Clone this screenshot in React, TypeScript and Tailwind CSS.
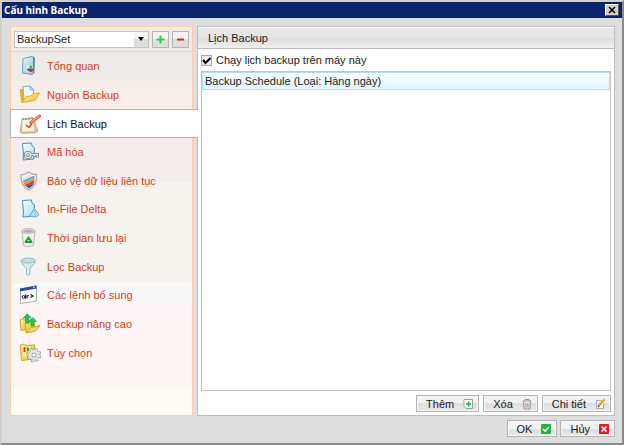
import { useState } from "react";
import type { ReactNode } from "react";

function Icon({ children }: { children: ReactNode }) {
  return (
    <svg viewBox="0 0 22 22" className="size-[22px] shrink-0" aria-hidden="true">
      {children}
    </svg>
  );
}

const sheet = (
  <path
    d="M3.500 2.500 12.500 2 13 5 15.500 7 15 18 4 19 4.500 14Z"
    fill="url(#sheetFill)"
    stroke="#4a8fb9"
    strokeLinejoin="round"
  />
);

const items: { label: string; icon: ReactNode }[] = [
  {
    label: "Tổng quan",
    icon: (
      <>
        <path d="M4 3.500 13 1.500 15.500 2.500 15 18 13 19.500 3.500 18Z" fill="url(#pageFill)" stroke="#6aa6b8" strokeLinejoin="round" />
        <path d="M14 2 15.500 2.500 15 18 14 19Z" fill="#4c8da2" />
        <circle cx="10.500" cy="14" r="3.600" fill="#eef6f8" />
        <path d="M10.500 13.500V10.500A3 3 0 0 1 13.500 13.500Z" fill="#2fae62" />
        <path d="M7.500 13.500H10.500L12 16.500A4 4 0 0 1 7.500 13.500Z" fill="#3967c4" />
        <path d="M10 13.800H14.200A3.200 3.200 0 0 1 11 17.200Z" fill="#e0261c" />
      </>
    ),
  },
  {
    label: "Nguồn Backup",
    icon: (
      <>
        <path d="M1 6 4 5 5 17 3 18.500Z" fill="#e8b82b" stroke="#c99621" strokeWidth=".7" />
        <path d="M4 2.500 11 2 14.500 5.500V14L5 16Z" fill="#f4fbfe" stroke="#78b3d0" />
        <path d="M11 2V6H14.500Z" fill="#b5dbee" stroke="#78b3d0" strokeWidth=".7" />
        <path d="M3 18.500 7 12.500 12 12 14 9.500 20.500 9 16 16.500Z" fill="url(#folderFill)" stroke="#dfae2c" strokeLinejoin="round" />
      </>
    ),
  },
  {
    label: "Lịch Backup",
    icon: (
      <>
        <path d="M1 19 3 6 14 5 19 18 17 19.500 4 20.500Z" fill="#d8c7a2" stroke="#a8956f" strokeWidth=".7" />
        <path d="M3 6.500 13.500 6 16 18 3 19Z" fill="#f8f3dd" stroke="#d5c59f" strokeWidth=".7" />
        <path d="M4 7V5M7 7V5M10 6.500V4.500M13 6V4" stroke="#7c7466" />
        <path d="M7 12 10 14.500 13 10.500" fill="none" stroke="#cf3a32" strokeWidth="1.300" />
        <path d="M12 9.500 20.500 3" stroke="#dc5844" strokeWidth="3" strokeLinecap="round" />
        <path d="M12.500 8.800 20 3" stroke="#ff9c86" strokeWidth="1.500" strokeLinecap="round" />
      </>
    ),
  },
  {
    label: "Mã hóa",
    icon: (
      <>
        {sheet}
        <circle cx="9" cy="14" r="2.600" fill="none" stroke="#737a7e" strokeWidth="3" />
        <path d="M11.500 13.500H18.500V16.500M15.500 13.500V16" fill="none" stroke="#737a7e" strokeWidth="3" />
        <circle cx="9" cy="14" r="2.600" fill="none" stroke="#e6e9ea" strokeWidth="1.500" />
        <path d="M11.500 13.500H18.500V16M15.500 13.500V15.500" fill="none" stroke="#e6e9ea" strokeWidth="1.400" />
      </>
    ),
  },
  {
    label: "Bảo vệ dữ liệu liên tục",
    icon: (
      <>
        <path d="M2 5Q6 5 9.500 2 13 5 17.500 4.500 18.500 15 10 20 1.500 16 2 5Z" fill="#fff" stroke="#b5b0ab" strokeWidth="1.400" />
        <path d="M4 7 9.500 5 15.500 6.500V9L5 14Z" fill="#e3e9ed" />
        <path d="M4 10.500 15.500 5.500V8L4.500 13Z" fill="#6aa9cf" />
        <path d="M4.500 13 15.500 8V10.500L5.500 15Z" fill="#ef8d35" />
        <path d="M5.500 15 15.500 10.500 15 13 7.500 16.500Z" fill="#c43938" />
        <path d="M7.500 16.500 15 13Q14 16 10 18.500Z" fill="#394f91" />
      </>
    ),
  },
  {
    label: "In-File Delta",
    icon: (
      <>
        {sheet}
        <path d="M15.500 10.500 20 17 16.500 19 10.500 18Z" fill="#b9e1f3" stroke="#6aa9cb" strokeLinejoin="round" />
        <path d="M15.500 10.500 16.500 19" stroke="#86bfd9" />
      </>
    ),
  },
  {
    label: "Thời gian lưu lại",
    icon: (
      <>
        <path d="M3 4 4.500 18.500Q9.500 21 14.500 18.500L16 4Z" fill="#f0f0ef" stroke="#b8b7b5" />
        <ellipse cx="9.500" cy="4" rx="6.500" ry="2.300" fill="#e2e2e1" stroke="#b5b5b4" />
        <ellipse cx="9.500" cy="4.300" rx="4.600" ry="1.200" fill="#aeb0ae" />
        <path d="M9.500 10.500 12.500 15H6.500Z" fill="#f0f0ef" stroke="#0ea62b" strokeWidth="2" strokeLinejoin="round" />
      </>
    ),
  },
  {
    label: "Lọc Backup",
    icon: (
      <>
        <path d="M2 4.500Q2 8 7.500 12V18.500Q9 20.500 11 18V12Q16.500 8 16.500 4.500Z" fill="#d3e9ea" stroke="#93bfc3" strokeLinejoin="round" />
        <ellipse cx="9.300" cy="4.500" rx="7" ry="2.500" fill="#bfe0e1" stroke="#93bfc3" />
        <path d="M5.500 8.500 9 12V18" fill="none" stroke="#f3fcfc" />
      </>
    ),
  },
  {
    label: "Các lệnh bổ sung",
    icon: (
      <>
        <path d="M1.500 5 17.500 2V17L1.500 19.500Z" fill="#fdfdfd" stroke="#a3abb5" />
        <path d="M1 4.500 17.500 1.500V4.500L1 7.500Z" fill="#2c4b9e" />
        <path d="M14 3.500 16 3" stroke="#cfe0ff" />
        <ellipse cx="4.500" cy="13" rx="1.300" ry="1.500" fill="none" stroke="#222" />
        <path d="M6.500 10.500V14.500M8 14.500V12L10 11.500M11.500 10.500 14 12 11.500 13.500" fill="none" stroke="#222" strokeWidth="1.200" />
      </>
    ),
  },
  {
    label: "Backup nâng cao",
    icon: (
      <>
        <path d="M1 7 4 5.500 5 7 9 6 10 16 2 17.500Z" fill="url(#folderFill)" stroke="#c9a632" />
        <path d="M6 11 10 9.500 15 9 16 15 7 19Z" fill="#f2d251" stroke="#c9a632" />
        <path d="M7 20 12 14.500 15 14 21 12.500 16.500 18Z" fill="url(#folderFill)" stroke="#c9a632" strokeLinejoin="round" />
        <path d="M6.500 10V5H4L8.500 .8 12 5H9.500V10Z" fill="#1ecb48" stroke="#22a94b" strokeWidth=".7" />
        <path d="M12 13V8.500H9.500L14 4.500 17.500 8.500H15V13Z" fill="#1ecb48" stroke="#22a94b" strokeWidth=".7" />
      </>
    ),
  },
  {
    label: "Tùy chọn",
    icon: (
      <>
        <path d="M1.500 3 5 2 7 3.500 15.500 3V17L2.500 18.500Z" fill="url(#folderFill)" stroke="#c9a632" />
        <path d="M4 5V14.500L7 14V5ZM9 5V14L12 13V5Z" fill="#fff0a8" />
        <path d="M5.500 5V10" stroke="#d9362c" strokeWidth="2" />
        <path d="M9 9V5.500" stroke="#23a83b" strokeWidth="2" />
        <circle cx="15" cy="13" r="5.800" fill="none" stroke="#8f9396" strokeWidth="3" strokeDasharray="2.700 1.850" />
        <circle cx="15" cy="13" r="3.800" fill="#fff" stroke="#8f9396" strokeWidth="4" />
        <circle cx="15" cy="13" r="3.800" fill="none" stroke="#e5e6e7" strokeWidth="2.600" />
        <circle cx="15" cy="13" r="5.800" fill="none" stroke="#e5e6e7" strokeWidth="1.600" strokeDasharray="2.300 2.250" />
      </>
    ),
  },
];

function PushButton({ label, children }: { label: string; children: ReactNode }) {
  return (
    <button className="flex h-[17px] items-center gap-2 border border-[#b5b5b5] bg-[linear-gradient(#f2f2f2_50%,#dedede_50%,#e9e9e9)] pr-1 pl-[9px] shadow-[inset_0_0_0_1px_#f4f4f4]">
      <span>{label}</span>
      <svg viewBox="0 0 12 12" className="size-3" aria-hidden="true">
        {children}
      </svg>
    </button>
  );
}

export default function App() {
  const [selected, setSelected] = useState(2);
  const [enabled, setEnabled] = useState(true);

  return (
    <div className="flex min-h-screen flex-col border-t-2 border-r-2 border-b-2 border-l-2 border-t-[#d4d0c8] border-r-[#8a8a8a] border-b-[#8a8a8a] border-l-[#d4d0c8] bg-[#dedede] font-['Liberation_Sans',Arial,sans-serif] text-[11px] leading-4 text-[#222]">
      <svg className="absolute size-0" aria-hidden="true">
        <defs>
          <linearGradient id="pageFill" x2="1" y2="1">
            <stop stopColor="#e4f4f6" />
            <stop offset="1" stopColor="#8fc3d1" />
          </linearGradient>
          <linearGradient id="sheetFill" x2="1" y2="1">
            <stop stopColor="#fff" />
            <stop offset="1" stopColor="#a9d8f0" />
          </linearGradient>
          <linearGradient id="folderFill" x2="1" y2="1">
            <stop stopColor="#fff0a0" />
            <stop offset="1" stopColor="#efbd22" />
          </linearGradient>
        </defs>
      </svg>

      <header className="flex h-4 items-center justify-between bg-[#0a246a] pr-[3px] pl-[2px]">
        <h1 className="font-['Noto_Sans',sans-serif] text-[10px] font-bold text-white">Cấu hình Backup</h1>
        <button
          aria-label="Đóng"
          className="flex h-3 w-[14px] items-center justify-center border border-t-white border-r-[#555] border-b-[#555] border-l-white bg-[#d4d0c8]"
        >
          <svg viewBox="0 0 8 8" className="size-2" aria-hidden="true">
            <path d="M1 1 7 7M7 1 1 7" stroke="#000" strokeWidth="1.600" />
          </svg>
        </button>
      </header>

      <div className="flex flex-1 flex-col px-[7px] pt-2 pb-[6px]">
        <div className="flex flex-1 gap-1 pl-px">
          <aside className="w-[183px] shrink-0 border border-[#fccbb0] bg-[linear-gradient(#efebe8_54px,#f8eee8_54px,#f8eee8_84px,#f5ecee_110px,#f5ecee_155px,#f6f2ee_155px,#f6f2ee_256px,#f8f8f8_256px,#f8f8f8_278px,#fff5f6_278px,#fff5f6_361px,#fffcf5_361px)]">
            <div className="flex h-[25px] items-center gap-[3px] border-b border-[#fccbb0] px-[3px]">
              <div className="relative flex-1">
                <select
                  aria-label="Backup set"
                  className="block h-[17px] w-full appearance-none border border-[#c3c3c3] bg-white pl-[2px] leading-[15px] outline-none"
                >
                  <option>BackupSet</option>
                </select>
                <span className="pointer-events-none absolute inset-y-px right-px flex w-[14px] items-center justify-center bg-[linear-gradient(#f4f4f4_50%,#dcdcdc_50%)]">
                  <span className="border-x-[3px] border-t-4 border-x-transparent border-t-black" />
                </span>
              </div>
              <button
                aria-label="Thêm bộ backup"
                className="flex size-[17px] items-center justify-center border border-[#b5b5b5] bg-[linear-gradient(#f4f4f4_50%,#dedede_50%)]"
              >
                <svg viewBox="0 0 9 9" className="size-[9px]" aria-hidden="true">
                  <path d="M4.500 .5V8.500M.5 4.500H8.500" stroke="#2fc850" strokeWidth="2" />
                </svg>
              </button>
              <button
                aria-label="Xóa bộ backup"
                className="flex size-[17px] items-center justify-center border border-[#b5b5b5] bg-[linear-gradient(#f4f4f4_50%,#dedede_50%)]"
              >
                <svg viewBox="0 0 9 9" className="size-[9px]" aria-hidden="true">
                  <path d="M1 4.500H8" stroke="#f01818" strokeWidth="2" />
                </svg>
              </button>
            </div>
            <nav className="grid h-[315px] auto-rows-fr">
              {items.map((item, i) => (
                <button
                  key={item.label}
                  onClick={() => setSelected(i)}
                  aria-current={i === selected ? "page" : undefined}
                  className={
                    i === selected
                      ? "z-10 -mr-[6px] -ml-px flex items-center gap-[6px] border-y border-l border-[#b4b4b4] bg-white pl-2 text-left text-[#111]"
                      : "flex items-center gap-[6px] pl-2 text-left text-[#d83c14]"
                  }
                >
                  <Icon>{item.icon}</Icon>
                  {item.label}
                </button>
              ))}
            </nav>
          </aside>

          <section className="flex min-w-0 flex-1 flex-col border border-[#bdbdbd] bg-white">
            <h2 className="border-t border-b border-t-white border-b-[#bdbdbd] bg-[linear-gradient(#e6e6e6_50%,#dcdcdc_50%,#f0f0f0)] px-[10px] py-[2px]">
              Lịch Backup
            </h2>
            <div className="flex flex-1 flex-col px-[3px] pt-[3px] pb-[3px]">
              <label className="flex items-center gap-1 pb-[3px]">
                <span className="relative flex">
                  <input
                    type="checkbox"
                    checked={enabled}
                    onChange={(e) => setEnabled(e.target.checked)}
                    className="size-[11px] appearance-none border border-[#aaa] bg-[#ececec]"
                  />
                  {enabled && (
                    <svg viewBox="0 0 11 11" className="pointer-events-none absolute inset-0 size-[11px]" aria-hidden="true">
                      <path d="M2 5 4.500 8 9.500 3" fill="none" stroke="#000" strokeWidth="2" />
                    </svg>
                  )}
                </span>
                Chạy lịch backup trên máy này
              </label>
              <ul className="flex-1 border border-[#c4c4c4]">
                <li className="border border-[#ace0f5] bg-[linear-gradient(#fff,#def5fd)] px-[2px]">
                  Backup Schedule (Loại: Hàng ngày)
                </li>
              </ul>
              <div className="flex justify-end gap-1 pt-1">
                <PushButton label="Thêm">
                  <path d="M2 1.500H10.500V10.500H4L2 8.500Z" fill="#fff" stroke="#8aa898" />
                  <path d="M6.500 3.500V8.500M4 6H9" stroke="#18aa4b" strokeWidth="1.500" />
                </PushButton>
                <PushButton label="Xóa">
                  <path d="M1.500 3H10.500M4 2.500V1.500H8V2.500M2.500 3.500 3 11H9L9.500 3.500M5 5V9.500M7 5V9.500" fill="none" stroke="#959595" />
                </PushButton>
                <PushButton label="Chi tiết">
                  <path d="M7.500 2.500H2.500V10.500H9.500V6" fill="#fff" stroke="#aaa" />
                  <path d="M4.500 8 10.500 1.500" stroke="#e99a20" strokeWidth="2.200" />
                  <path d="M4 8.800 5 7.500" stroke="#5b4636" strokeWidth="1.500" />
                </PushButton>
              </div>
            </div>
          </section>
        </div>

        <footer className="flex justify-end gap-[3px] pt-1">
          <PushButton label="OK">
            <rect x="1" y="1" width="10" height="10" rx="1" fill="#25b43c" />
            <path d="M3 6 5.200 8.200 9 4" fill="none" stroke="#fff" strokeWidth="1.600" />
          </PushButton>
          <PushButton label="Hủy">
            <rect x="1" y="1" width="10" height="10" rx="1" fill="#f0141c" />
            <path d="M3.500 3.500 8.500 8.500M8.500 3.500 3.500 8.500" stroke="#fff" strokeWidth="1.700" />
          </PushButton>
        </footer>
      </div>
    </div>
  );
}
